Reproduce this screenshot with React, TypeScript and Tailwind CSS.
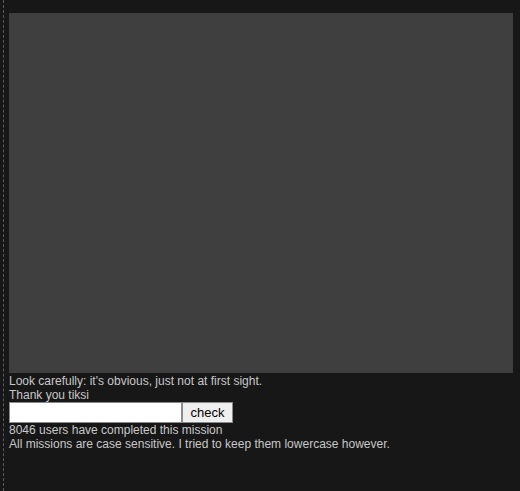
export default function App() {
    return (
        <div className="min-h-[491px] w-[520px] bg-[#171717] pl-[3px]">
            <div className="min-h-[491px] border-l border-dashed border-[#5a5a5a] pl-[5px] pt-[13px] font-['Liberation_Sans',sans-serif] text-[12px] leading-[14px] text-[#c8c8c8]">
                <div className="h-[360px] w-[504px] bg-[#3f3f3f]" />
                <p className="mt-[1px]">Look carefully: it's obvious, just not at first sight.</p>
                <p>Thank you tiksi</p>
                <div className="flex h-[21px]">
                    <input className="h-[21px] w-[173px] border border-[#8a8a8a] bg-white" />
                    <button className="h-[21px] w-[51px] border border-[#8a8a8a] bg-[#efefef] font-['Liberation_Sans',sans-serif] text-[13px] text-black">
                        check
                    </button>
                </div>
                <p>8046 users have completed this mission</p>
                <p>All missions are case sensitive. I tried to keep them lowercase however.</p>
            </div>
        </div>
    )
}
